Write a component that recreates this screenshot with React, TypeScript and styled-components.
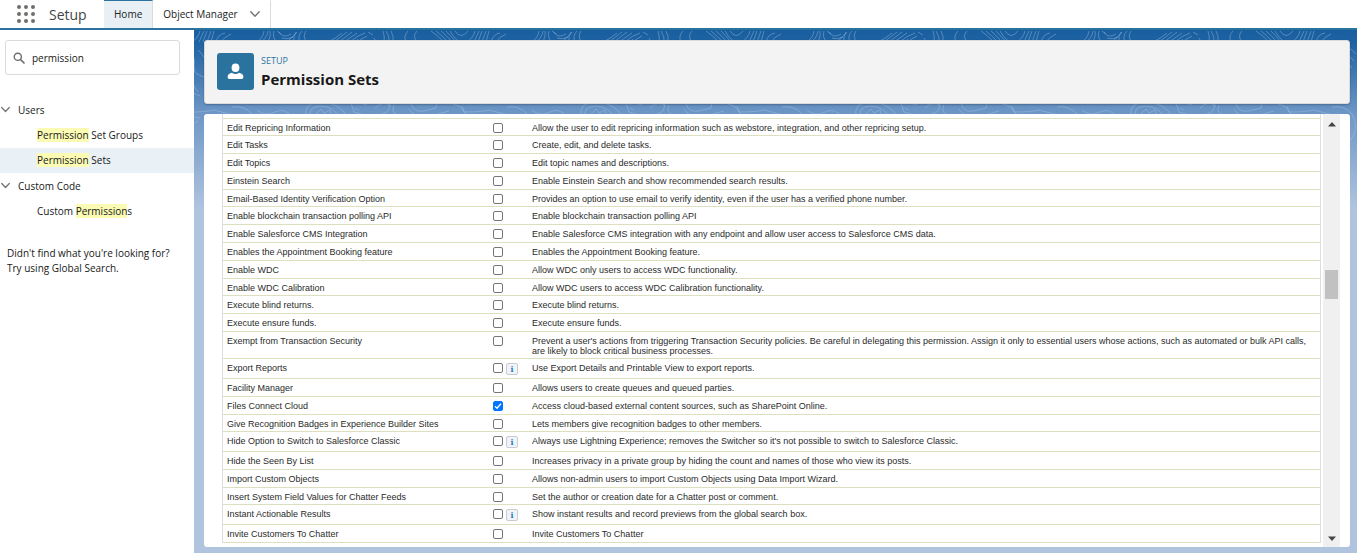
import React, { useState } from "react";
import styled, { createGlobalStyle } from "styled-components";

const uiFont = `"Open Sans", "Noto Sans", sans-serif`;
const tableFont = `"Liberation Sans", Arial, sans-serif`;

const GlobalStyle = createGlobalStyle`
  * { box-sizing: border-box; }
  body { margin: 0; background: #fff; }
  button, input { font: inherit; color: inherit; }
`;

const Page = styled.div`
  display: flex;
  flex-direction: column;
  height: 100vh;
  min-height: 400px;
  overflow: hidden;
  font-family: ${uiFont};
  font-size: 10px;
  color: #181818;
`;

const TopBar = styled.header`
  display: flex;
  flex: none;
  height: 30px;
  border-bottom: 2px solid #2a739e;
  background: #fff;
`;

const Brand = styled.div`
  display: flex;
  align-items: center;
  gap: 14px;
  width: 104px;
  padding-left: 17px;
`;

const LauncherButton = styled.button`
  display: block;
  width: 18px;
  height: 18px;
  padding: 0;
  border: 0;
  background: none;
`;

const AppName = styled.span`
  padding-top: 2px;
  font-size: 14px;
  line-height: 20px;
  color: #444;
`;

const Tabs = styled.nav`
  display: flex;
`;

const Tab = styled.div<{ $active?: boolean }>`
  display: flex;
  align-items: center;
  gap: 12px;
  padding: 0 10px 1px;
  border-top: 1px solid ${(p) => (p.$active ? "#2a739e" : "transparent")};
  border-right: 1px solid #dddbda;
  background: ${(p) => (p.$active ? "#e8f0f5" : "transparent")};
`;

const TabLink = styled.a`
  color: #222;
  text-decoration: none;
`;

const ChevronButton = styled.button`
  display: flex;
  padding: 0;
  border: 0;
  background: none;
`;

const Body = styled.div`
  display: flex;
  flex: 1;
  min-height: 0;
`;

const Sidebar = styled.aside`
  flex: none;
  width: 194px;
  padding-top: 10px;
  background: #fff;
`;

const SearchBox = styled.label`
  display: flex;
  align-items: center;
  gap: 7px;
  height: 35px;
  margin: 0 14px 22px 5px;
  padding: 0 7px;
  border: 1px solid #dddbda;
  border-radius: 3px;
`;

const SearchInput = styled.input`
  flex: 1;
  min-width: 0;
  padding: 0;
  border: 0;
  outline: 0;
  background: none;
`;

const TreeGroup = styled.button`
  display: flex;
  align-items: center;
  gap: 8px;
  width: 100%;
  height: 26px;
  padding: 0 0 1px 1px;
  border: 0;
  background: none;
  text-align: left;
`;

const TreeItem = styled.a<{ $selected?: boolean }>`
  display: flex;
  align-items: center;
  height: 25px;
  padding: 0 0 2px 37px;
  background: ${(p) => (p.$selected ? "#e9f0f6" : "transparent")};
  color: inherit;
  text-decoration: none;
  white-space: pre;
`;

const Highlight = styled.mark`
  background: #fbfbb4;
  color: inherit;
`;

const SearchHint = styled.p`
  margin: 22px 0 0;
  padding-left: 7px;
  line-height: 15px;
`;

const Main = styled.main`
  position: relative;
  display: flex;
  flex: 1;
  flex-direction: column;
  gap: 10px;
  min-width: 0;
  padding: 10px 7px 6px 10px;
  background: linear-gradient(to bottom, #185e9e 0, #2063a3 14px, #6e97c6 84px, #b0c4df 180px) #b0c4df;
`;

const Contours = styled.svg`
  position: absolute;
  top: 0;
  left: 0;
  width: 100%;
  height: 160px;
`;

const PageHeader = styled.header`
  position: relative;
  display: flex;
  flex: none;
  align-items: center;
  gap: 7px;
  height: 64px;
  padding: 0 13px 2px;
  border: 1px solid #dddbda;
  border-radius: 3px;
  background: #f3f3f3;
  box-shadow: 0 1px 2px rgba(0, 0, 0, 0.25);
`;

const HeaderIcon = styled.span`
  display: flex;
  align-items: center;
  justify-content: center;
  width: 37px;
  height: 37px;
  margin-left: -1px;
  border-radius: 3px;
  background: #2a739e;
`;

const Eyebrow = styled.p`
  margin: 0;
  font-size: 9px;
  line-height: 16px;
  color: #2a739e;
`;

const Title = styled.h1`
  margin: 0;
  font-size: 15px;
  font-weight: 700;
  line-height: 20px;
`;

const Panel = styled.section`
  position: relative;
  display: flex;
  flex: 1;
  gap: 2px;
  min-height: 0;
  padding: 0 10px 0 18px;
  border-radius: 3px;
  background: #fff;
  overflow: hidden;
`;

const TableArea = styled.div`
  flex: 1;
  min-width: 0;
  overflow: hidden;
`;

const Table = styled.table`
  width: 100%;
  border: solid #ddd;
  border-width: 0 1px;
  border-spacing: 0;
  table-layout: fixed;
  font-family: ${tableFont};
  font-size: 9px;
  line-height: 10px;
  color: #2a2a2a;
`;

const Row = styled.tr<{ $height: number }>`
  height: ${(p) => p.$height}px;
`;

const Cell = styled.td`
  padding: 4px 4px 0;
  border-bottom: 1px solid #dddfbe;
  text-align: left;
  vertical-align: top;
  font-weight: 400;
`;

const Controls = styled.div`
  display: flex;
  gap: 3px;
  height: 10px;
`;

const Checkbox = styled.input`
  flex: none;
  width: 10px;
  height: 10px;
  margin: 0;
  appearance: none;
  border: 1px solid #767676;
  border-radius: 2px;
  background: #fff;

  &:checked {
    border-color: #0075ff;
    background: #0075ff url("data:image/svg+xml,%3Csvg xmlns='http://www.w3.org/2000/svg' viewBox='0 0 8 8'%3E%3Cpath d='M1 4.2l2 2L7 1.6' fill='none' stroke='white' stroke-width='1.4'/%3E%3C/svg%3E") center / 8px 8px no-repeat;
  }
`;

const InfoButton = styled.button`
  display: flex;
  flex: none;
  align-items: center;
  justify-content: center;
  width: 12px;
  height: 12px;
  padding: 0;
  border: 1px solid #c8ccd0;
  border-radius: 2px;
  background: #f0f4f8;
  font-family: "DejaVu Serif", serif;
  font-size: 8px;
  font-weight: 700;
  line-height: 10px;
  color: #2a7ac0;
`;

const ScrollTrack = styled.div`
  display: flex;
  flex: none;
  flex-direction: column;
  align-items: center;
  width: 17px;
  padding: 8px 0 6px;
  background: #f0f0f0;
`;

const Thumb = styled.div`
  width: 13px;
  height: 29px;
  background: #c1c1c1;
`;

const Spacer = styled.div<{ $grow: number }>`
  flex: ${(p) => p.$grow} 1 0;
`;

const Chevron = ({ size = 9 }: { size?: number }) => (
  <svg width={size} height={size} viewBox="0 0 10 10" aria-hidden="true">
    <path d="M0.8 2.8 L5 7.2 L9.2 2.8" fill="none" stroke="#747474" strokeWidth="1.4" strokeLinecap="round" strokeLinejoin="round" />
  </svg>
);

const ContourPattern = () => (
  <Contours aria-hidden="true">
    <defs>
      <pattern id="contours" x="63" width="275" height="160" patternUnits="userSpaceOnUse">
        <g fill="none" stroke="#a9c9ea" strokeOpacity="0.5" strokeWidth="0.8">
          <path d="M0 12Q6 8 7 1M4 12Q10 8 11 1M10 12Q14 8 13 1M17 1Q15 8 20 12M22 2Q26 9 34 4M25 8Q30 10 36 7M20 1L24 4M40 2Q37 6 32 10M45 1Q40 6 43 12M37 12Q36 6 39 2M50 12Q45 7 49 1" />
          <path d="M71 12Q78 9 85 3M77 12L90 2M82 12L95 2M87 12L100 3M93 12Q99 6 108 3M111 2L116 5M117 8L119 12M103 10L110 6M98 12L101 9" />
          <path d="M126 1Q128 7 127 12M129 1Q133 7 132 12M134 1Q137 6 136 12M151 1Q146 6 149 12M160 1Q155 6 160 12" />
          <path d="M174 1Q180 5 187 12M179 1Q184 5 191 12M184 1Q189 5 195 12M189 1Q193 5 199 12M193 1Q200 14 209 12Q216 9 218 1M198 1Q204 10 211 1M217 12L222 1M221 12L225 1M225 12L229 1M229 12L232 1M234 12Q236 4 243 3M239 12Q242 7 249 4" />
          <path d="M206 20Q214 26 212 36T228 48M216 20Q226 28 222 38M205 28Q216 34 210 48T218 66M207 40Q210 55 216 62" />
          <path d="M250 16Q266 14 274 24M250 22Q264 20 272 31M251 29Q264 28 270 38M252 46Q263 42 264 51Q263 59 252 56M249 36Q262 38 266 42" />
          <path d="M49 88Q46 72 63 72Q83 72 91 88M54 88Q50 77 63 76Q76 76 83 88M59 84L64 79L67 83L73 80L75 87M60 88Q63 84 70 88" />
          <path d="M94 73L97 82L107 85M103 73L110 75M118 78Q126 70 134 76M98 78L102 80M125 84Q134 82 132 74M137 75Q133 83 143 86" />
          <path d="M154 73Q156 83 167 81L179 78L180 73M152 79Q157 88 170 86M196 74Q205 76 207 82Q225 82 232 80L251 85M181 84L192 81M187 88L194 84M232 86Q242 87 252 90" />
          <path d="M250 77Q262 75 270 84Q278 98 268 111M252 92Q262 91 264 103Q265 111 257 120M252 97Q258 96 260 103" />
          <path d="M205 76Q208 88 218 88M211 98Q200 105 210 119M216 91Q200 98 206 116M0 80Q8 87 18 82T36 88" />
        </g>
      </pattern>
    </defs>
    <rect width="100%" height="160" fill="url(#contours)" />
  </Contours>
);

type Permission = { name: string; text: string; height: number; info?: boolean; on?: boolean };

const permissions: Permission[] = [
  { name: "Edit Repricing Information", text: "Allow the user to edit repricing information such as webstore, integration, and other repricing setup.", height: 17 },
  { name: "Edit Tasks", text: "Create, edit, and delete tasks.", height: 18 },
  { name: "Edit Topics", text: "Edit topic names and descriptions.", height: 18 },
  { name: "Einstein Search", text: "Enable Einstein Search and show recommended search results.", height: 18 },
  { name: "Email-Based Identity Verification Option", text: "Provides an option to use email to verify identity, even if the user has a verified phone number.", height: 17 },
  { name: "Enable blockchain transaction polling API", text: "Enable blockchain transaction polling API", height: 18 },
  { name: "Enable Salesforce CMS Integration", text: "Enable Salesforce CMS integration with any endpoint and allow user access to Salesforce CMS data.", height: 18 },
  { name: "Enables the Appointment Booking feature", text: "Enables the Appointment Booking feature.", height: 18 },
  { name: "Enable WDC", text: "Allow WDC only users to access WDC functionality.", height: 18 },
  { name: "Enable WDC Calibration", text: "Allow WDC users to access WDC Calibration functionality.", height: 17 },
  { name: "Execute blind returns.", text: "Execute blind returns.", height: 18 },
  { name: "Execute ensure funds.", text: "Execute ensure funds.", height: 18 },
  { name: "Exempt from Transaction Security", text: "Prevent a user's actions from triggering Transaction Security policies. Be careful in delegating this permission. Assign it only to essential users whose actions, such as automated or bulk API calls, are likely to block critical business processes.", height: 27 },
  { name: "Export Reports", text: "Use Export Details and Printable View to export reports.", height: 20, info: true },
  { name: "Facility Manager", text: "Allows users to create queues and queued parties.", height: 18 },
  { name: "Files Connect Cloud", text: "Access cloud-based external content sources, such as SharePoint Online.", height: 18, on: true },
  { name: "Give Recognition Badges in Experience Builder Sites", text: "Lets members give recognition badges to other members.", height: 17 },
  { name: "Hide Option to Switch to Salesforce Classic", text: "Always use Lightning Experience; removes the Switcher so it's not possible to switch to Salesforce Classic.", height: 20, info: true },
  { name: "Hide the Seen By List", text: "Increases privacy in a private group by hiding the count and names of those who view its posts.", height: 18 },
  { name: "Import Custom Objects", text: "Allows non-admin users to import Custom Objects using Data Import Wizard.", height: 18 },
  { name: "Insert System Field Values for Chatter Feeds", text: "Set the author or creation date for a Chatter post or comment.", height: 17 },
  { name: "Instant Actionable Results", text: "Show instant results and record previews from the global search box.", height: 20, info: true },
  { name: "Invite Customers To Chatter", text: "Invite Customers To Chatter", height: 18 },
];

const dots = [2, 9, 16];

export default function App() {
  const [query, setQuery] = useState("permission");

  return (
    <Page>
      <GlobalStyle />
      <TopBar>
        <Brand>
          <LauncherButton aria-label="App Launcher">
            <svg width="18" height="18" viewBox="0 0 18 18">
              {dots.map((y) => dots.map((x) => <circle key={`${x}-${y}`} cx={x} cy={y} r="2" fill="#706e6b" />))}
            </svg>
          </LauncherButton>
          <AppName>Setup</AppName>
        </Brand>
        <Tabs>
          <Tab $active>
            <TabLink href="#home">Home</TabLink>
          </Tab>
          <Tab>
            <TabLink href="#object-manager">Object Manager</TabLink>
            <ChevronButton aria-label="Object Manager list">
              <Chevron size={10} />
            </ChevronButton>
          </Tab>
        </Tabs>
      </TopBar>
      <Body>
        <Sidebar>
          <SearchBox>
            <svg width="12" height="12" viewBox="0 0 12 12" aria-hidden="true">
              <circle cx="4.8" cy="4.8" r="3.6" fill="none" stroke="#706e6b" strokeWidth="1.4" />
              <path d="M7.5 7.5 L11 11" stroke="#706e6b" strokeWidth="1.7" strokeLinecap="round" />
            </svg>
            <SearchInput aria-label="Quick Find" value={query} onChange={(e) => setQuery(e.target.value)} />
          </SearchBox>
          <TreeGroup aria-expanded="true"><Chevron />Users</TreeGroup>
          <TreeItem href="#groups"><Highlight>Permission</Highlight> Set Groups</TreeItem>
          <TreeItem href="#sets" $selected><Highlight>Permission</Highlight> Sets</TreeItem>
          <TreeGroup aria-expanded="true"><Chevron />Custom Code</TreeGroup>
          <TreeItem href="#custom">Custom <Highlight>Permission</Highlight>s</TreeItem>
          <SearchHint>
            Didn't find what you're looking for?
            <br />
            Try using Global Search.
          </SearchHint>
        </Sidebar>
        <Main>
          <ContourPattern />
          <PageHeader>
            <HeaderIcon>
              <svg width="17" height="17" viewBox="0 0 17 17" aria-hidden="true">
                <ellipse cx="8.5" cy="4.8" rx="3.9" ry="4.3" fill="#fff" />
                <path d="M4.8 9.8Q8.5 12.2 12.2 9.8Q16.4 10.8 16.4 14.2Q16.4 16 14.6 16H2.4Q0.6 16 0.6 14.2Q0.6 10.8 4.8 9.8Z" fill="#fff" />
              </svg>
            </HeaderIcon>
            <div>
              <Eyebrow>SETUP</Eyebrow>
              <Title>Permission Sets</Title>
            </div>
          </PageHeader>
          <Panel>
            <TableArea>
              <Table>
                <colgroup>
                  <col style={{ width: 266 }} />
                  <col style={{ width: 39 }} />
                  <col />
                </colgroup>
                <tbody>
                  <Row $height={5} aria-hidden="true">
                    <Cell colSpan={3} />
                  </Row>
                  {permissions.map((p, i) => (
                    <Row key={p.name} $height={p.height}>
                      <Cell as="th" scope="row">
                        <label htmlFor={`permission-${i}`}>{p.name}</label>
                      </Cell>
                      <Cell>
                        <Controls>
                          <Checkbox type="checkbox" id={`permission-${i}`} defaultChecked={p.on} />
                          {p.info && <InfoButton aria-label={`About ${p.name}`}>i</InfoButton>}
                        </Controls>
                      </Cell>
                      <Cell>{p.text}</Cell>
                    </Row>
                  ))}
                </tbody>
              </Table>
            </TableArea>
            <ScrollTrack aria-hidden="true">
              <svg width="8" height="5" viewBox="0 0 8 5"><path d="M0 4.5L4 0L8 4.5Z" fill="#444" /></svg>
              <Spacer $grow={143} />
              <Thumb />
              <Spacer $grow={236} />
              <svg width="8" height="5" viewBox="0 0 8 5"><path d="M0 0.5L4 5L8 0.5Z" fill="#444" /></svg>
            </ScrollTrack>
          </Panel>
        </Main>
      </Body>
    </Page>
  );
}
